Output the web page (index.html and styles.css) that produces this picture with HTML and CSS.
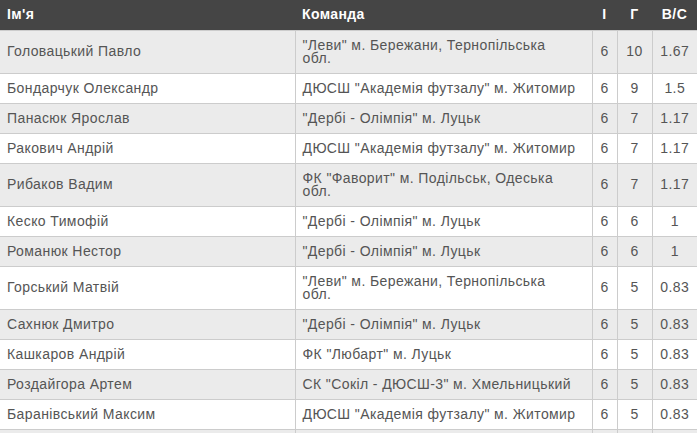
FILE: index.html
```html
<!DOCTYPE html>
<html lang="uk">
<head>
<meta charset="utf-8">
<link rel="stylesheet" href="styles.css">
</head>
<body>
<table class="stats">
  <colgroup>
    <col class="c-name"><col class="c-team"><col class="c-i"><col class="c-g"><col class="c-vs">
  </colgroup>
  <thead>
    <tr><th class="left">Ім'я</th><th class="left">Команда</th><th>І</th><th>Г</th><th>В/С</th></tr>
  </thead>
  <tbody>
    <tr><td>Головацький Павло</td><td class="team">"Леви" м. Бережани, Тернопільська обл.</td><td class="num">6</td><td class="num">10</td><td class="num">1.67</td></tr>
    <tr><td>Бондарчук Олександр</td><td class="team">ДЮСШ "Академія футзалу" м. Житомир</td><td class="num">6</td><td class="num">9</td><td class="num">1.5</td></tr>
    <tr><td>Панасюк Ярослав</td><td class="team">"Дербі - Олімпія" м. Луцьк</td><td class="num">6</td><td class="num">7</td><td class="num">1.17</td></tr>
    <tr><td>Ракович Андрій</td><td class="team">ДЮСШ "Академія футзалу" м. Житомир</td><td class="num">6</td><td class="num">7</td><td class="num">1.17</td></tr>
    <tr><td>Рибаков Вадим</td><td class="team">ФК "Фаворит" м. Подільськ, Одеська обл.</td><td class="num">6</td><td class="num">7</td><td class="num">1.17</td></tr>
    <tr><td>Кеско Тимофій</td><td class="team">"Дербі - Олімпія" м. Луцьк</td><td class="num">6</td><td class="num">6</td><td class="num">1</td></tr>
    <tr><td>Романюк Нестор</td><td class="team">"Дербі - Олімпія" м. Луцьк</td><td class="num">6</td><td class="num">6</td><td class="num">1</td></tr>
    <tr><td>Горський Матвій</td><td class="team">"Леви" м. Бережани, Тернопільська обл.</td><td class="num">6</td><td class="num">5</td><td class="num">0.83</td></tr>
    <tr><td>Сахнюк Дмитро</td><td class="team">"Дербі - Олімпія" м. Луцьк</td><td class="num">6</td><td class="num">5</td><td class="num">0.83</td></tr>
    <tr><td>Кашкаров Андрій</td><td class="team">ФК "Любарт" м. Луцьк</td><td class="num">6</td><td class="num">5</td><td class="num">0.83</td></tr>
    <tr><td>Роздайгора Артем</td><td class="team">СК "Сокіл - ДЮСШ-3" м. Хмельницький</td><td class="num">6</td><td class="num">5</td><td class="num">0.83</td></tr>
    <tr><td>Баранівський Максим</td><td class="team">ДЮСШ "Академія футзалу" м. Житомир</td><td class="num">6</td><td class="num">5</td><td class="num">0.83</td></tr>
    <tr><td>&nbsp;</td><td class="team">&nbsp;</td><td class="num">&nbsp;</td><td class="num">&nbsp;</td><td class="num">&nbsp;</td></tr>
  </tbody>
</table>
</body>
</html>
```

FILE: styles.css
```css
html, body {
  margin: 0;
  padding: 0;
  background: #ffffff;
}

.stats {
  border-collapse: collapse;
  table-layout: fixed;
  width: 697px;
  font-family: "Liberation Sans", Arial, sans-serif;
  font-size: 14px;
  line-height: 13px;
  color: #555555;
  letter-spacing: 0.4px;
}

.c-name { width: 295px; }
.c-team { width: 297px; }
.c-i { width: 25px; }
.c-g { width: 35px; }
.c-vs { width: 45px; }

.stats th {
  background: #454545;
  color: #ffffff;
  font-weight: bold;
  height: 30px;
  padding: 0 7px;
  box-sizing: border-box;
  text-align: center;
  border-bottom: 1px solid #cccccc;
}

.stats th.left {
  text-align: left;
}

.stats td {
  padding: 8px 7px;
  border: 1px solid #cccccc;
  text-align: left;
  vertical-align: middle;
}

.stats td.team {
  padding-right: 14px;
}

.stats td:first-child { border-left: none; }
.stats td:last-child { border-right: none; }

.stats td.num {
  text-align: center;
  padding-left: 2px;
  padding-right: 2px;
}

.stats tbody tr:nth-child(odd) td {
  background: #ebebeb;
}

.stats tbody tr:nth-child(even) td {
  background: #ffffff;
}
```
